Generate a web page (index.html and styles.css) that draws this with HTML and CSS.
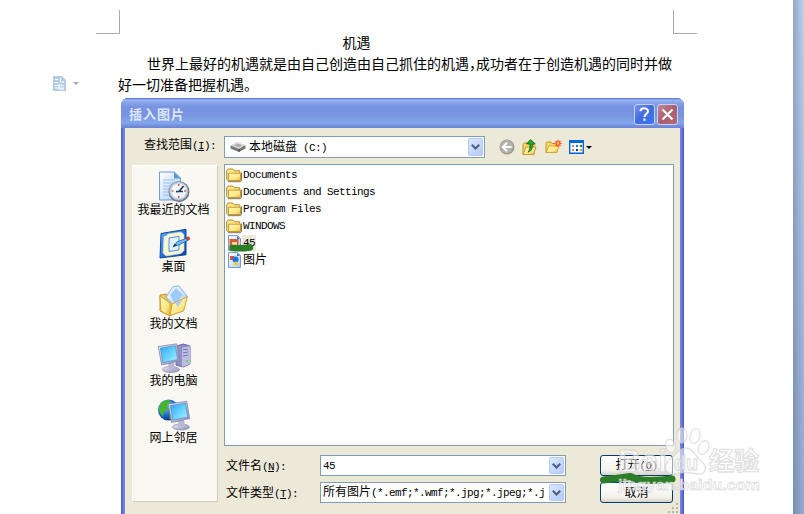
FILE: index.html
```html
<!DOCTYPE html>
<html lang="zh-CN">
<head>
<meta charset="utf-8">
<title>插入图片</title>
<link rel="stylesheet" href="styles.css">
</head>
<body>
<svg width="0" height="0" class="defs" aria-hidden="true">
  <defs>
    <linearGradient id="gold" x1="0" y1="0" x2="1" y2="1"><stop offset="0" stop-color="#fffbb8"/><stop offset=".6" stop-color="#ffe888"/><stop offset="1" stop-color="#e8b840"/></linearGradient>
    <linearGradient id="screen" x1="0" y1="0" x2="1" y2="1"><stop offset="0" stop-color="#2fa4f5"/><stop offset=".6" stop-color="#6fd8ff"/><stop offset="1" stop-color="#b8f2ff"/></linearGradient>
    <linearGradient id="paper" x1="0" y1="0" x2="1" y2="1"><stop offset="0" stop-color="#ffffff"/><stop offset="1" stop-color="#a9cdf6"/></linearGradient>
    <linearGradient id="metal" x1="0" y1="0" x2="1" y2="1"><stop offset="0" stop-color="#eeeefa"/><stop offset="1" stop-color="#8888b4"/></linearGradient>
    <linearGradient id="blue" x1="0" y1="0" x2="1" y2="1"><stop offset="0" stop-color="#62b2ff"/><stop offset=".6" stop-color="#1166dd"/><stop offset="1" stop-color="#0b3fa6"/></linearGradient>
    <radialGradient id="globe" cx=".35" cy=".3" r=".7"><stop offset="0" stop-color="#a8dcff"/><stop offset=".5" stop-color="#2b77e4"/><stop offset="1" stop-color="#08379a"/></radialGradient>
    <symbol id="folder" viewBox="0 0 16 16">
      <path d="M2 14.700h12.500l1-1V5.500" fill="none" stroke="#7b7562" stroke-width="1"/>
      <path d="M.7 12.500V3.400L2.200 2h4.600l1.500 1.800h5.500v8.700l-1 1.200H1.800z" fill="#ffe68d" stroke="#b58a1f"/>
      <path d="M2.500 6.200h12v7.300H3.300L2.500 12.700z" fill="url(#gold)" stroke="#c1942a" stroke-width=".9"/>
    </symbol>
    <symbol id="monitor" viewBox="0 0 24 30">
      <ellipse cx="14" cy="26.500" rx="8.500" ry="3" fill="url(#metal)" stroke="#8889aa" stroke-width=".7"/>
      <path d="M11 20l6-1 1 7h-6z" fill="#b6b8d4"/>
      <path d="M1.300 3.500L19.700.8l3 17.300L4.600 22z" fill="url(#metal)" stroke="#8586b0" stroke-width=".8"/>
      <path d="M3.300 5l15-2.200 2.300 13.800-14.800 3z" fill="url(#screen)" stroke="#4878b9" stroke-width=".5"/>
    </symbol>
  </defs>
</svg>

<main class="page">
  <div class="corner corner-left"></div>
  <div class="corner corner-right"></div>
  <article class="doc">
    <h1>机遇</h1>
    <p>世界上最好的机遇就是由自己创造由自己抓住的机遇<span class="comma">，</span>成功者在于创造机遇的同时并做<br>好一切准备把握机遇。</p>
  </article>
  <div class="paste-tag">
    <svg width="13" height="15" viewBox="0 0 13 15"><path d="M0 0h9l4 4v11H0z" fill="#b6cbe9"/><path d="M2 3.500h3M2 6.500h3M2 9.500h9M2 12h9M7.500 2v4H11M6 8v5h5" stroke="#fff" fill="none"/></svg>
    <span class="tag-arrow"></span>
  </div>
</main>
<aside class="gutter"></aside>

<section class="dialog">
  <header class="titlebar">
    <span class="title">插入图片</span>
    <span class="winbtn help"><svg width="17" height="17" viewBox="0 0 17 17"><path d="M4.500 5.300C4.500 1.400 12 1.300 12 5.200 12 7.800 8.400 7.900 8.400 11" stroke="#fff" stroke-width="2.100" fill="none"/><path d="M7.300 12.500h2.200v2.200H7.300z" fill="#fff"/></svg></span>
    <span class="winbtn close"><svg width="17" height="17" viewBox="0 0 17 17"><path d="M3.500 3.500l10 10M13.500 3.500l-10 10" stroke="#fff" stroke-width="2.200"/></svg></span>
  </header>
  <div class="body">
    <div class="lookup">
      <label>查找范围<span class="m">(<u>I</u>):</span></label>
      <div class="combo">
        <svg class="drive" width="16" height="12" viewBox="0 0 16 12"><path d="M.5 5L7 1.500 15.500 4.500v3L9 11 .5 7.500z" fill="#777"/><path d="M.5 4.500L7 1l8.500 3L9 8z" fill="#d5d5d5"/><path d="M4 4.500l4-1.700 4 1.400-3.500 1.700z" fill="#aaa"/><path d="M9 8.200v2.500" stroke="#333"/></svg>
        <span>本地磁盘<span class="m">&nbsp;(C:)</span></span>
        <span class="drop"><svg width="9" height="6" viewBox="0 0 9 6"><path d="M.8.800l3.700 3.700L8.200.8" fill="none" stroke="#4d6185" stroke-width="2.200"/></svg></span>
      </div>
      <div class="tools">
        <svg width="16" height="16" viewBox="0 0 16 16"><circle cx="8" cy="8" r="7.500" fill="#989791"/><circle cx="7.600" cy="7.600" r="6.700" fill="#b2b1ab"/><path d="M12.500 8H4M8 3.800L3.800 8 8 12.200" fill="none" stroke="#fff" stroke-width="2"/></svg>
        <svg width="16" height="17" viewBox="0 0 16 17"><path d="M1 15.500V5l1.200-1H6l1 1.500h5v10z" fill="#fbd66b" stroke="#c99520"/><path d="M1 15.500L4 8h10l-2.500 7.500z" fill="url(#gold)" stroke="#c99a26"/><path d="M8.500.6l4.800 4.300h-2.700c0 4-.6 6.800-4.600 8.300 1.700-2 2-4.300 1.900-8.300H4.400z" fill="#28a42a" stroke="#0d681b" stroke-width=".8"/></svg>
        <svg width="16" height="16" viewBox="0 0 16 16"><path d="M1 13.500V4l1.200-1H6l1 1.500h5v9z" fill="#fbd66b" stroke="#c99520"/><path d="M1 13.500L4 7h10l-2.500 6.500z" fill="url(#gold)" stroke="#d1a53b"/><path d="M13 1v7M9.500 4.500h7M10.600 2l4.900 5M15.500 2l-4.900 5" stroke="#ff5524" stroke-width="1.300"/><circle cx="13" cy="4.500" r="1.200" fill="#ffcf65"/></svg>
        <span class="view"><svg width="15" height="14" viewBox="0 0 15 14"><path d="M.7.700h13.600v12.600H.7z" fill="#f5faff" stroke="#0864cd" stroke-width="1.400"/><path d="M0 0h15v3H0z" fill="#0867d8"/><path d="M3 5h2v2H3z" fill="#a08c9d"/><path d="M7 5h2v2H7z" fill="#2872c5"/><path d="M11 5h2v2h-2z" fill="#188c2a"/><path d="M3 9h2v2H3z" fill="#f0784f"/><path d="M7 9h2v2H7z" fill="#18368c"/><path d="M11 9h2v2h-2z" fill="#d8a01e"/></svg><i class="caret"></i></span>
      </div>
    </div>

    <div class="content">
      <nav class="places">
        <div class="place">
          <svg width="32" height="32" viewBox="0 0 32 32"><path d="M1.500 1h15l6 6v22h-21z" fill="url(#paper)" stroke="#6f9cd4"/><path d="M16 1v6.500h6.500z" fill="#5998e0"/><path d="M5 9h12M5 12h10M5 15h8M5 18h7M5 21h6M5 24h7" stroke="#9dbfe8"/><circle cx="21" cy="20.700" r="10.500" fill="#6d7684"/><circle cx="20.700" cy="20" r="9.300" fill="#c6d5e4" stroke="#97a7bc"/><circle cx="20.700" cy="20" r="7.300" fill="#f4f9ff"/><path d="M20.700 13v2M20.700 25v2M13.500 20h2M26 20h2" stroke="#ee6036" stroke-width="1.600"/><path d="M18 20.700l3-.2 4.500-5.500M21 20.500l4 0" fill="none" stroke="#253c5d" stroke-width="1.700"/></svg>
          <span>我最近的文档</span>
        </div>
        <div class="place">
          <svg width="32" height="32" viewBox="0 0 32 32"><path d="M3 5.500L28 1.300v25.500L2 30z" fill="url(#blue)" stroke="#174889"/><path d="M6 8.500Q9 8 10 6l13-2 3 2.500v16l-3 3L8 28l-3-3z" fill="#fff6ce" stroke="#c7d8e9" stroke-width=".7"/><path d="M11 10l10-1.700V22L11 23.500z" fill="#dff3ff" stroke="#4792de"/><path d="M16 18l3-4 10-4 1.500 2-10 5z" fill="#6fc1ff" stroke="#16569d" stroke-width=".8"/><path d="M14.500 19.500l2-4 2.500 2z" fill="#17416c"/><circle cx="30" cy="10.500" r="1.900" fill="#c9402d"/></svg>
          <span>桌面</span>
        </div>
        <div class="place">
          <svg width="32" height="32" viewBox="0 0 32 32"><path d="M2 10l7-1 3 3 10-3 2 16-12 6-10-5z" fill="#efc658" stroke="#c79635"/><path d="M8 12L15 1.500 21 1l8 10-10 13z" fill="url(#paper)" stroke="#80b4e6"/><path d="M12 10l6-7 7 7-8 9z" fill="#9dcbfa"/><path d="M2 11l10 7v13L3 26z" fill="url(#gold)" stroke="#d3a43a"/><path d="M12 30.500L14 19l15.500-7.500L25.500 26z" fill="url(#gold)" stroke="#d2a13a"/><path d="M17 18l8-4-5 8z" fill="#a7d0f0"/></svg>
          <span>我的文档</span>
        </div>
        <div class="place">
          <svg width="34" height="32" viewBox="0 0 34 32"><path d="M20 4l6-2 7 2v18l-7 3-7-2z" fill="#8e8fc4" stroke="#6668a3"/><path d="M25 6l8-2v18l-8 3z" fill="#bcbde3"/><path d="M26 8l5-1M26 11l5-1M26 14l5-1" stroke="#7376af"/><path d="M29 18h2v2h-2z" fill="#5ce13c"/><use href="#monitor" x="0" y="1" width="24" height="30"/></svg>
          <span>我的电脑</span>
        </div>
        <div class="place">
          <svg width="34" height="32" viewBox="0 0 34 32"><circle cx="11.500" cy="11" r="10.500" fill="url(#globe)"/><path d="M2 7Q6 0 12 1l2 3-4 3 2 3-5 3-1 5Q1 13 2 7z" fill="#45b52f"/><path d="M12 13l5-1v9l-5-1z" fill="#2c9638"/><use href="#monitor" x="10" y="1" width="24" height="31"/></svg>
          <span>网上邻居</span>
        </div>
      </nav>

      <div class="main">
        <ul class="files">
          <li><svg width="16" height="16"><use href="#folder"/></svg><span class="m">Documents</span></li>
          <li><svg width="16" height="16"><use href="#folder"/></svg><span class="m">Documents and Settings</span></li>
          <li><svg width="16" height="16"><use href="#folder"/></svg><span class="m">Program Files</span></li>
          <li><svg width="16" height="16"><use href="#folder"/></svg><span class="m">WINDOWS</span></li>
          <li class="selected"><svg width="16" height="16" viewBox="0 0 16 16"><path d="M2.500.500h9l3 3v12h-12z" fill="url(#paper)" stroke="#7899ce"/><path d="M11 1v3h3z" fill="#3b7bc8"/><path d="M3.500 4h9v8h-9z" fill="#db5a32"/><path d="M6 7h5v5H6z" fill="#ffd8a0"/></svg><span class="m">45</span>
            <svg class="stroke-file" width="28" height="10" viewBox="0 0 28 10"><path d="M5.500 5q9 .8 17.500-.5" fill="none" stroke="#2b7d27" stroke-width="6.500" stroke-linecap="round"/></svg></li>
          <li><svg width="16" height="16" viewBox="0 0 16 16"><path d="M2.500.500h9l3 3v12h-12z" fill="url(#paper)" stroke="#7899ce"/><path d="M11 1v3h3z" fill="#3b7bc8"/><path d="M4 4h4v4H4z" fill="#e75034"/><circle cx="9.500" cy="7.500" r="3" fill="#1673e8"/><path d="M7 13l3-4 3 4z" fill="#ffc622"/></svg><span>图片</span></li>
        </ul>
        <div class="form">
          <label>文件名<span class="m">(<u>N</u>):</span></label>
          <div class="combo"><span class="m">45</span><span class="drop"><svg width="9" height="6" viewBox="0 0 9 6"><path d="M.8.800l3.700 3.700L8.200.8" fill="none" stroke="#4d6185" stroke-width="2.200"/></svg></span></div>
          <button>打开<span class="m">(<u>O</u>)</span></button>
          <label>文件类型<span class="m">(<u>T</u>):</span></label>
          <div class="combo"><span>所有图片<span class="m">(*.emf;*.wmf;*.jpg;*.jpeg;*.j</span></span><span class="drop"><svg width="9" height="6" viewBox="0 0 9 6"><path d="M.8.800l3.700 3.700L8.200.8" fill="none" stroke="#4d6185" stroke-width="2.200"/></svg></span></div>
          <button>取消</button>
        </div>
      </div>
    </div>
    <svg class="grip" width="12" height="12" viewBox="0 0 12 12"><path d="M9 1h2v2H9zM5 5h2v2H5zM9 5h2v2H9zM1 9h2v2H1zM5 9h2v2H5zM9 9h2v2H9z" fill="#b8b4a2"/></svg>
  </div>
</section>

<svg class="open-mark" width="80" height="14" viewBox="0 0 80 14"><path d="M5.500 8Q20 6.500 32 4.500 40 8.500 52 8.500T74 7" fill="none" stroke="#2b7d27" stroke-width="7" stroke-linecap="round" stroke-linejoin="round"/></svg>

<svg class="watermark" width="160" height="80" viewBox="0 0 160 80">
  <g class="wm-fill">
    <ellipse cx="53.500" cy="26" rx="4.800" ry="7" transform="rotate(-14 53.500 26)"/>
    <ellipse cx="65" cy="15.500" rx="5" ry="7.500"/>
    <ellipse cx="78" cy="16" rx="5" ry="7.500" transform="rotate(14 78 16)"/>
    <ellipse cx="86.500" cy="27.500" rx="5" ry="7" transform="rotate(24 86.500 27.500)"/>
    <path d="M69 28c7 0 9 8 15 13 8 7 4 14-4 13-8-2-15-2-22 0-10 1-13-8-5-15 6-4 9-11 16-11z"/>
  </g>
  <g class="wm-text">
    <text x="1" y="52" font-size="32" textLength="49" lengthAdjust="spacingAndGlyphs">Bai</text>
    <text x="57" y="50" font-size="20" textLength="24" lengthAdjust="spacingAndGlyphs">du</text>
    <text x="92" y="50" font-size="25" textLength="50">经验</text>
  </g>
  <text x="1" y="70" font-size="15" textLength="142" lengthAdjust="spacingAndGlyphs" class="wm-url">jingyan.baidu.com</text>
</svg>
</body>
</html>
```
FILE: styles.css
```css
* { box-sizing: border-box; }

body {
  margin: 0;
  width: 804px;
  height: 514px;
  overflow: hidden;
  position: relative;
  display: flex;
  background: #fff;
  color: #000;
  font: 12px/16px "Liberation Sans", "Noto Sans CJK SC", sans-serif;
}

.defs { position: absolute; }

.page { width: 793px; position: relative; }

.gutter {
  width: 11px;
  background:
    linear-gradient(90deg, rgba(75, 95, 130, .38), rgba(75, 95, 130, 0)),
    linear-gradient(#bfd2ee, #94abd0);
}

.corner {
  position: absolute;
  top: 10px;
  width: 24px;
  height: 24px;
  border: solid #aaa;
}
.corner-left { left: 96px; border-width: 0 1px 1px 0; }
.corner-right { left: 673px; border-width: 0 0 1px 1px; }

.doc {
  padding: 32px 118px 0;
  font: 14px/21px "Noto Sans CJK SC", sans-serif;
}
.doc h1 { margin: 0; font: inherit; text-align: center; padding-right: 80px; }
.doc p { margin: 0; text-indent: 29px; white-space: nowrap; }
.comma { display: inline-block; width: 7px; text-indent: 0; }

.paste-tag {
  position: absolute;
  left: 53px;
  top: 76px;
  display: flex;
  align-items: center;
  gap: 7px;
}
.tag-arrow { border: 3px solid transparent; border-top-color: #aaa; border-bottom: 0; }

.dialog {
  position: absolute;
  left: 121px;
  top: 98px;
  width: 563px;
  height: 430px;
  padding: 0 4px;
  border-radius: 7px 7px 0 0;
  background: linear-gradient(90deg, #4d59c5, #7187e2 3px, #7187e2 560px, #4d4fb8);
  overflow: hidden;
}

.titlebar {
  height: 30px;
  margin: 0 -4px;
  padding: 2px 6px 0 8px;
  display: flex;
  align-items: center;
  gap: 2px;
  background: linear-gradient(#4f6bd0, #9ab8f0 2px, #8ba5ea 4px, #7893df 9px, #7894e0 17px, #82a7eb 25px, #738edd 28px, #6c82d5);
}
.title {
  flex: 1;
  color: #dce6fb;
  font: bold 13px/20px "Noto Sans CJK SC", sans-serif;
  letter-spacing: 1px;
}
.winbtn {
  width: 21px;
  height: 21px;
  border: 1px solid #c4d2f7;
  border-radius: 3px;
  display: grid;
  place-items: center;
}
.help { background: linear-gradient(135deg, #7796ef, #416be0 45%, #3c78ef); }
.close { background: linear-gradient(135deg, #c28795, #aa5f6d 50%, #b36872); }

.body { background: #ece9d8; height: 400px; padding: 0 6px 0 7px; position: relative; }

.lookup { height: 36px; display: flex; align-items: center; padding: 2px 0 0 12px; }
.lookup label { width: 80px; margin-top: -3px; white-space: nowrap; }

.m {
  font-family: "Liberation Mono", monospace;
  font-size: 11px;
  letter-spacing: -.6px;
}

.combo {
  height: 22px;
  border: 1px solid #7f9db9;
  background: #fff;
  display: flex;
  align-items: center;
  padding: 0 1px 0 2px;
  white-space: nowrap;
  overflow: hidden;
}
.lookup .combo { width: 261px; padding-left: 5px; gap: 3px; }
.drop {
  margin-left: auto;
  flex: none;
  width: 15px;
  height: 18px;
  border-radius: 2px;
  border: 1px solid #b6c9f3;
  background: linear-gradient(135deg, #dce8ff, #b4cafa);
  display: grid;
  place-items: center;
}

.tools { display: flex; align-items: center; gap: 7px; margin-left: 14px; }
.tools svg { overflow: visible; flex: none; }
.view { display: flex; align-items: center; gap: 2px; margin-left: 1px; }
.caret { border: 3px solid transparent; border-top-color: #000; border-bottom: 0; }

.content { display: grid; grid-template-columns: 86px 450px; column-gap: 6px; }

.places {
  height: 337px;
  margin-top: 1px;
  padding: 5px 3px 0 0;
  border: 1px solid #fff;
  border-right-color: #cfccbd;
  border-bottom-color: #cfccbd;
  background: #f9f8f3;
}
.place { height: 57px; display: flex; flex-direction: column; align-items: center; white-space: nowrap; }
.place svg { flex: none; }
.place span { line-height: 14px; }

.files {
  height: 282px;
  margin: 0;
  padding: 1px;
  list-style: none;
  border: 1px solid #7f9db9;
  background: #fff;
}
.files li { height: 17px; display: flex; align-items: center; position: relative; }
.files li > span { padding: 0 1px; }
.selected > span { background: #ece9d8; }
.stroke-file { position: absolute; left: 1px; top: 9px; }

.form {
  display: grid;
  grid-template-columns: 94px 246px 73px;
  row-gap: 6px;
  grid-auto-rows: 21px;
  align-items: center;
  padding: 9px 0 0 2px;
}
.form label { padding-top: 2px; }
.form .combo { height: 21px; }
.form .drop { height: 17px; }
.form button {
  margin-left: 34px;
  width: 73px;
  height: 21px;
  padding: 0;
  border: 1px solid #003c74;
  border-radius: 3px;
  background: linear-gradient(#fff, #f3f2ec 75%, #d8d2c5);
  color: #000;
  font: inherit;
  line-height: 16px;
}

.grip { position: absolute; right: 1px; top: 374px; }
.open-mark { position: absolute; left: 598px; top: 472px; }

.watermark {
  position: absolute;
  left: 617px;
  top: 420px;
  overflow: visible;
  font-family: "Liberation Sans", "Noto Sans CJK SC", sans-serif;
  font-weight: bold;
}
.wm-fill, .wm-text { fill: rgba(255, 255, 255, .55); stroke: rgba(205, 205, 205, .6); stroke-width: 1.3; }
.wm-url { fill: rgba(255, 255, 255, .75); stroke: rgba(200, 200, 200, .6); stroke-width: .8; }
```
